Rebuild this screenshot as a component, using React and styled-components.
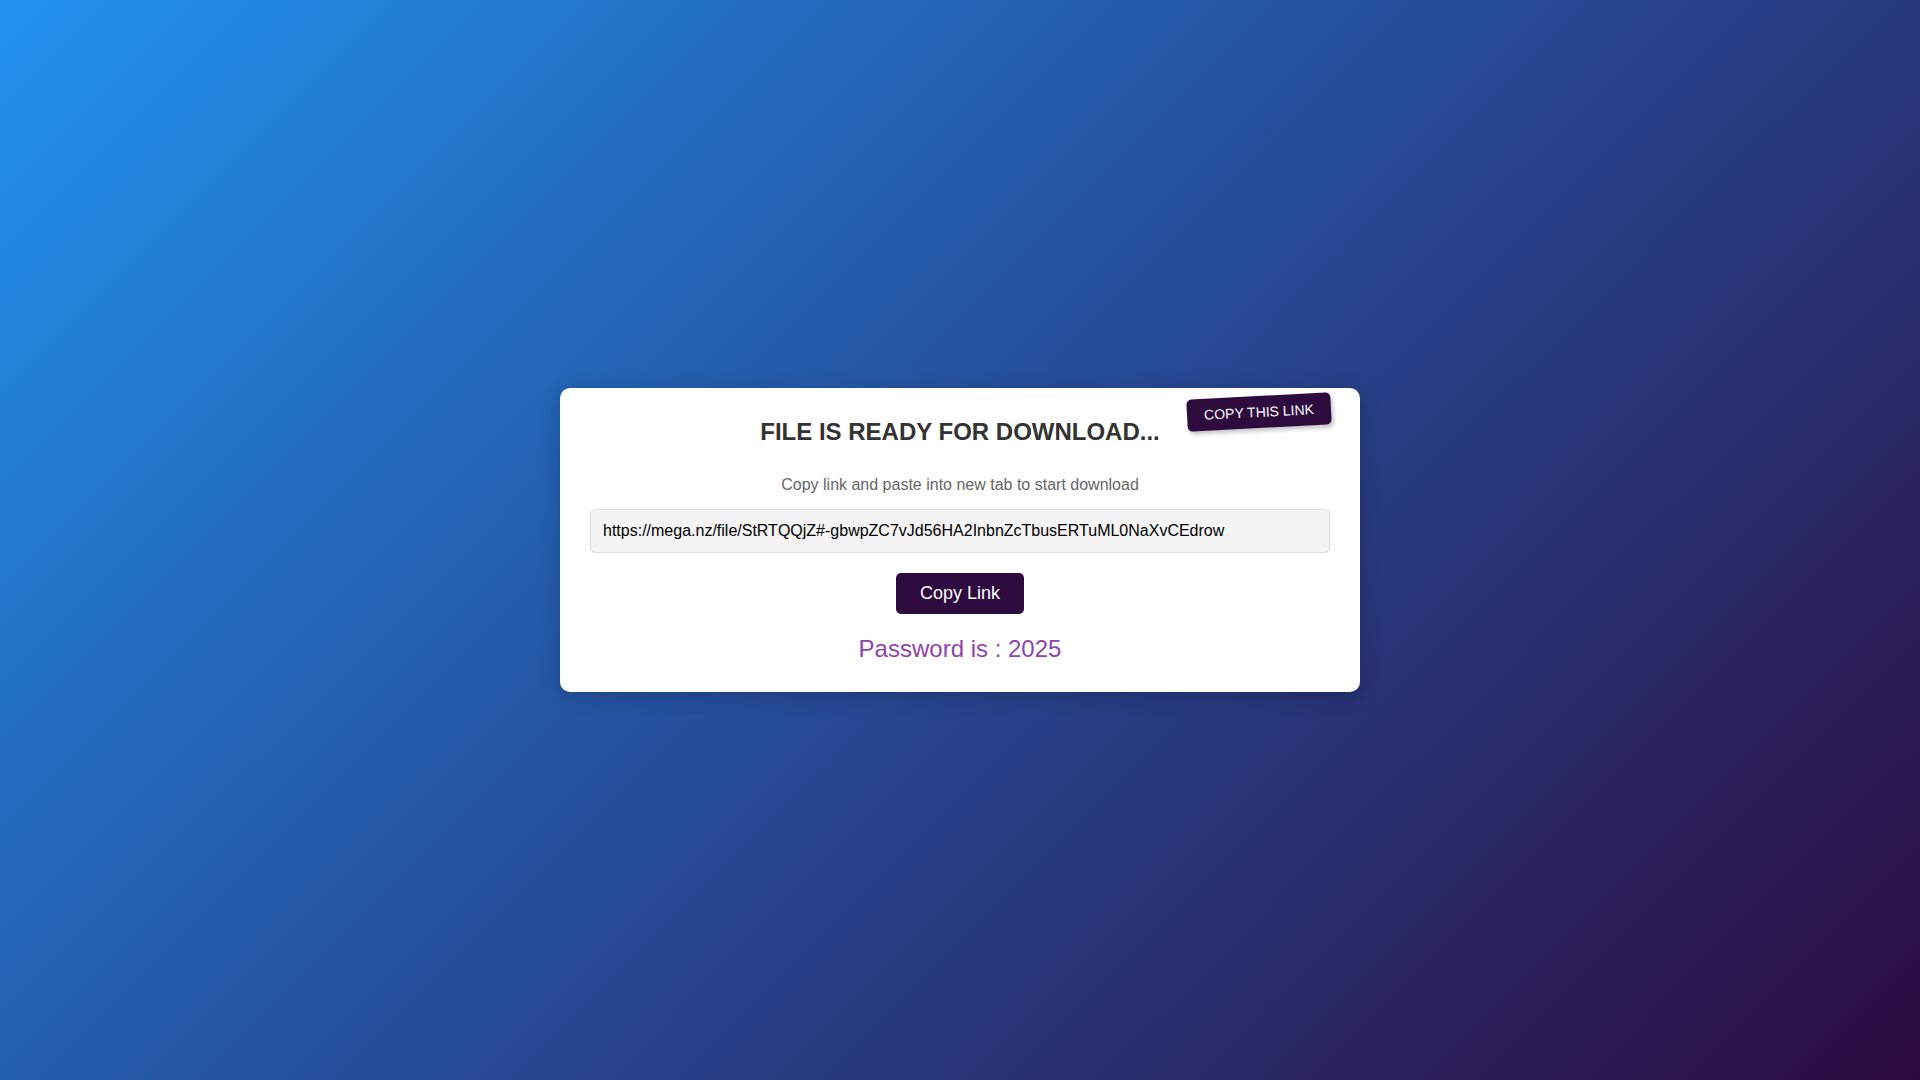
import styled, { createGlobalStyle } from "styled-components";

const GlobalStyle = createGlobalStyle`
  * {
    box-sizing: border-box;
  }

  html,
  body {
    margin: 0;
    padding: 0;
    height: 100%;
  }

  body {
    font-family: "Liberation Sans", Arial, sans-serif;
  }

  #root {
    height: 100%;
  }
`;

const LINK =
  "https://mega.nz/file/StRTQQjZ#-gbwpZC7vJd56HA2InbnZcTbusERTuML0NaXvCEdrow";

export default function App() {
  return (
    <>
      <GlobalStyle />
      <Page>
        <Card>
          <Badge>Copy this link</Badge>
          <Title>FILE IS READY FOR DOWNLOAD...</Title>
          <Hint>Copy link and paste into new tab to start download</Hint>
          <LinkInput type="text" value={LINK} readOnly />
          <CopyButton type="button">Copy Link</CopyButton>
          <Password>Password is : 2025</Password>
        </Card>
      </Page>
    </>
  );
}

const Page = styled.div`
  width: 100vw;
  height: 100vh;
  display: flex;
  align-items: center;
  justify-content: center;
  background: linear-gradient(135deg, #2193ee 0%, #25519f 45%, #2c0a3d 100%);
`;

const Card = styled.div`
  position: relative;
  width: 800px;
  padding: 30px 30px 29px;
  display: flex;
  flex-direction: column;
  align-items: center;
  background-color: #ffffff;
  border-radius: 10px;
  box-shadow: 0 4px 20px rgba(0, 0, 0, 0.2);
`;

const Badge = styled.div`
  position: absolute;
  top: 8px;
  right: 29px;
  padding: 8px 17px;
  background-color: #2d0b3e;
  color: #ffffff;
  font-size: 14px;
  line-height: 16px;
  text-transform: uppercase;
  border-radius: 5px;
  transform: rotate(-3deg);
  box-shadow: 2px 3px 4px rgba(0, 0, 0, 0.25);
`;

const Title = styled.h2`
  margin: 0 0 30px;
  font-size: 24px;
  font-weight: bold;
  color: #333333;
`;

const Hint = styled.p`
  margin: 0 0 15px;
  font-size: 16px;
  color: #666666;
`;

const LinkInput = styled.input`
  width: 100%;
  padding: 12px;
  font-family: "Liberation Sans", Arial, sans-serif;
  font-size: 16px;
  line-height: 18px;
  color: #000000;
  background-color: #f4f4f4;
  border: 1px solid #dddddd;
  border-radius: 5px;
  outline: none;
`;

const CopyButton = styled.button`
  margin-top: 20px;
  padding: 10px 24px;
  font-family: "Liberation Sans", Arial, sans-serif;
  font-size: 18px;
  line-height: 21px;
  color: #ffffff;
  background-color: #2d0b3e;
  border: none;
  border-radius: 5px;
  cursor: pointer;
`;

const Password = styled.p`
  margin: 21px 0 0;
  font-size: 24px;
  color: #8e44ad;
`;
